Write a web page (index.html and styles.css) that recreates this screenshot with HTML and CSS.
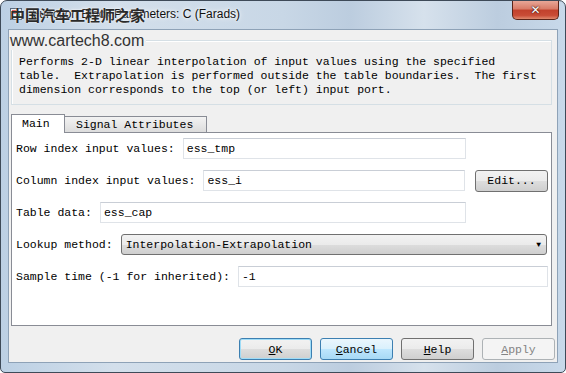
FILE: index.html
```html
<!DOCTYPE html>
<html lang="en">
<head>
    <meta charset="UTF-8">
    <title>Function Block Parameters: C (Farads)</title>
    <link rel="stylesheet" href="styles.css">
</head>
<body>
    <div class="window">
        <div class="titlebar">
            <svg class="app-icon" width="12" height="12" viewBox="0 0 12 12">
                <rect x="0.5" y="0.5" width="11" height="11" fill="#e8eef5" stroke="#5a6b80"/>
                <rect x="2" y="2" width="4" height="4" fill="#d33"/>
                <rect x="6" y="6" width="4" height="4" fill="#2a8c3a"/>
                <path d="M6 4 H9 V6" fill="none" stroke="#2456b0" stroke-width="1.2"/>
            </svg>
            <span class="title">Function Block Parameters: C (Farads)</span>
            <span class="close">&#x2715;</span>
            <span class="wm-cn">中国汽车工程师之家</span>
        </div>

        <div class="client">
            <div class="group">
                <span class="wm-url">www.cartech8.com</span>
                <p>Performs 2-D linear interpolation of input values using the specified
table.  Extrapolation is performed outside the table boundaries.  The first
dimension corresponds to the top (or left) input port.</p>
            </div>

            <div class="tabs">
                <span class="tab active">Main</span>
                <span class="tab">Signal Attributes</span>
            </div>

            <div class="panel">
                <div class="row short">
                    <label>Row index input values:</label>
                    <div class="field">ess_tmp</div>
                </div>
                <div class="row">
                    <label>Column index input values:</label>
                    <div class="field">ess_i</div>
                    <button class="btn edit">Edit...</button>
                </div>
                <div class="row short">
                    <label>Table data:</label>
                    <div class="field">ess_cap</div>
                </div>
                <div class="row">
                    <label>Lookup method:</label>
                    <div class="select">Interpolation-Extrapolation<span class="arrow">&#9660;</span></div>
                </div>
                <div class="row">
                    <label>Sample time (-1 for inherited):</label>
                    <div class="field">-1</div>
                </div>
            </div>

            <div class="buttons">
                <button class="btn default"><u>O</u>K</button>
                <button class="btn hover"><u>C</u>ancel</button>
                <button class="btn"><u>H</u>elp</button>
                <button class="btn" disabled><u>A</u>pply</button>
            </div>
        </div>
    </div>
</body>
</html>
```

FILE: styles.css
```css
body {
    margin: 0;
    background: #ffffff;
    font-family: "Liberation Mono", "Courier New", monospace;
    font-size: 11.5px;
    color: #000;
}

.window {
    position: relative;
    width: 566px;
    height: 373px;
    box-sizing: border-box;
    display: flex;
    flex-direction: column;
    padding: 0 7px 9px 7px;
    border: 1px solid #3e4a58;
    border-radius: 7px 7px 5px 5px;
    background: linear-gradient(90deg, #bcd0e4 0%, #d3dfeb 20%, #c8d7e6 50%, #bccddf 62%, #d6e1ec 75%, #bccddf 88%, #c8d9ea 100%);
    overflow: hidden;
}

.titlebar {
    position: relative;
    height: 28px;
    display: flex;
    align-items: flex-start;
    margin-right: -1px;
}

.app-icon {
    margin: 7px 0 0 2px;
    flex: none;
}

.title {
    margin: 6px 0 0 10px;
    font-family: "Liberation Sans", Arial, sans-serif;
    font-size: 12px;
    color: #111;
    text-shadow: 0 0 6px #fff, 0 0 3px #fff;
    flex: 1;
}

.close {
    width: 45px;
    height: 18px;
    border: 1px solid #5b2418;
    border-top: none;
    border-radius: 0 0 5px 5px;
    background: linear-gradient(#e8a797 0%, #d87a66 45%, #c2412c 50%, #c94c36 80%, #e08a6e 100%);
    color: #fff;
    font-family: "DejaVu Sans", sans-serif;
    font-weight: bold;
    font-size: 12px;
    line-height: 18px;
    text-align: center;
    text-shadow: 0 0 2px #3a0c05, 0 0 1px #3a0c05;
}

.wm-cn {
    position: absolute;
    left: 2px;
    top: 4px;
    font-family: "Noto Sans CJK SC", sans-serif;
    font-size: 15px;
    font-weight: bold;
    line-height: 20px;
    color: #2a2a2a;
    text-shadow: 0 0 2px #fff;
}

.client {
    flex: 1;
    display: flex;
    flex-direction: column;
    background: #f0f0f0;
    border: 1px solid #8ea2b7;
    padding: 0 5px 0 2px;
}

.group {
    position: relative;
    margin-top: 10px;
    padding: 0 7px 7px 7px;
    border: 1px solid #d5dfe5;
    box-shadow: inset 1px 1px 0 #fff;
}

.wm-url {
    position: absolute;
    left: -2px;
    top: -9px;
    font-family: "Liberation Sans", Arial, sans-serif;
    font-size: 16px;
    line-height: 18px;
    color: #333;
    background: #f0f0f0;
    padding-right: 2px;
}

.group p {
    margin: 14px 0 0 0;
    white-space: pre;
    line-height: 14px;
}

.tabs {
    display: flex;
    align-items: flex-end;
    margin-top: 9px;
    height: 19px;
    position: relative;
    z-index: 1;
    margin-bottom: -1px;
}

.tab {
    box-sizing: border-box;
    height: 17px;
    line-height: 15px;
    border: 1px solid #898c95;
    border-left: none;
    background: linear-gradient(#f3f3f3, #dcdcdc);
    padding-left: 11px;
    width: 142px;
}

.tab.active {
    height: 19px;
    width: 54px;
    line-height: 18px;
    padding-left: 10px;
    border-left: 1px solid #898c95;
    border-bottom: none;
    background: #fff;
}

.panel {
    height: 194px;
    box-sizing: border-box;
    background: #fff;
    border: 1px solid #898c95;
    padding: 5px 3px 0 4px;
}

.row {
    display: flex;
    align-items: center;
    height: 21px;
    margin-bottom: 11px;
    gap: 8px;
}

.row.short {
    padding-right: 82px;
}

.row label {
    flex: none;
}

.field {
    flex: 1;
    box-sizing: border-box;
    height: 21px;
    line-height: 19px;
    padding-left: 3px;
    border: 1px solid #dfe3e8;
    border-top-color: #c9ced6;
    background: #fff;
}

.select {
    flex: 1;
    box-sizing: border-box;
    height: 21px;
    line-height: 19px;
    padding-left: 4px;
    margin-right: 1px;
    border: 1px solid #707070;
    border-radius: 3px;
    background: linear-gradient(#f2f2f2 0%, #ebebeb 50%, #dddddd 51%, #cfcfcf 100%);
    display: flex;
    justify-content: space-between;
}

.select .arrow {
    font-size: 8px;
    margin-right: 5px;
}

.btn {
    flex: none;
    box-sizing: border-box;
    width: 73px;
    height: 22px;
    padding: 0;
    font-family: "Liberation Mono", "Courier New", monospace;
    font-size: 11.5px;
    font-weight: normal;
    color: #000;
    border: 1px solid #707070;
    border-radius: 3px;
    background: linear-gradient(#f2f2f2 0%, #ebebeb 50%, #dddddd 51%, #cfcfcf 100%);
}

.btn.edit {
    margin-left: 2px;
}

.btn.default {
    border-color: #3c7fb1;
    box-shadow: inset 0 0 0 1px #9fdcf7;
}

.btn.hover {
    border-color: #3c7fb1;
    background: linear-gradient(#eaf6fd 0%, #d9f0fc 50%, #bee6fd 51%, #a7d9f5 100%);
}

.btn:disabled {
    border-color: #adb2b5;
    background: #f4f4f4;
    color: #838383;
}

.buttons {
    display: flex;
    justify-content: flex-end;
    gap: 8px;
    margin: 12px -3px 0 0;
}
```
